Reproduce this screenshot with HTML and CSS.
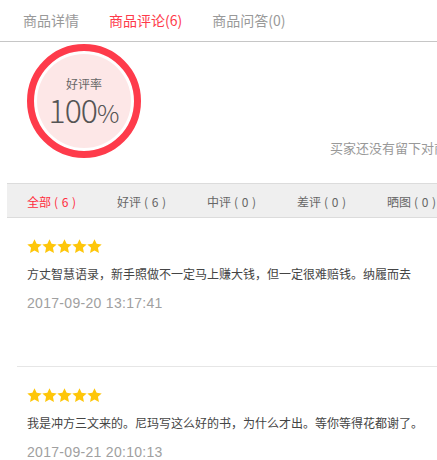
FILE: index.html
```html
<!DOCTYPE html>
<html lang="zh-CN">
<head>
<meta charset="utf-8">
<link rel="stylesheet" href="styles.css">
</head>
<body>
<div class="page">
  <div class="tabs">
    <span class="tab">商品详情</span>
    <span class="tab active">商品评论(6)</span>
    <span class="tab">商品问答(0)</span>
  </div>
  <div class="summary">
    <div class="ring">
      <div class="ring-label">好评率</div>
      <div class="ring-value">100<span class="pct">%</span></div>
    </div>
    <div class="note">买家还没有留下对商品的印象</div>
  </div>
  <div class="filters">
    <span class="filter active">全部<span class="count">( 6 )</span></span>
    <span class="filter">好评<span class="count">( 6 )</span></span>
    <span class="filter">中评<span class="count">( 0 )</span></span>
    <span class="filter">差评<span class="count">( 0 )</span></span>
    <span class="filter">晒图<span class="count">( 0 )</span></span>
  </div>
  <div class="reviews">
    <div class="review">
      <div class="stars">
        <svg viewBox="0 0 24 24"><polygon points="12,0.5 15.4,7.7 23.5,8.6 17.5,14.1 19.1,22.5 12,18.4 4.9,22.5 6.5,14.1 0.5,8.6 8.6,7.7"/></svg>
        <svg viewBox="0 0 24 24"><polygon points="12,0.5 15.4,7.7 23.5,8.6 17.5,14.1 19.1,22.5 12,18.4 4.9,22.5 6.5,14.1 0.5,8.6 8.6,7.7"/></svg>
        <svg viewBox="0 0 24 24"><polygon points="12,0.5 15.4,7.7 23.5,8.6 17.5,14.1 19.1,22.5 12,18.4 4.9,22.5 6.5,14.1 0.5,8.6 8.6,7.7"/></svg>
        <svg viewBox="0 0 24 24"><polygon points="12,0.5 15.4,7.7 23.5,8.6 17.5,14.1 19.1,22.5 12,18.4 4.9,22.5 6.5,14.1 0.5,8.6 8.6,7.7"/></svg>
        <svg viewBox="0 0 24 24"><polygon points="12,0.5 15.4,7.7 23.5,8.6 17.5,14.1 19.1,22.5 12,18.4 4.9,22.5 6.5,14.1 0.5,8.6 8.6,7.7"/></svg>
      </div>
      <div class="text">方丈智慧语录，新手照做不一定马上赚大钱，但一定很难赔钱。纳履而去</div>
      <div class="date">2017-09-20 13:17:41</div>
    </div>
    <div class="review">
      <div class="stars">
        <svg viewBox="0 0 24 24"><polygon points="12,0.5 15.4,7.7 23.5,8.6 17.5,14.1 19.1,22.5 12,18.4 4.9,22.5 6.5,14.1 0.5,8.6 8.6,7.7"/></svg>
        <svg viewBox="0 0 24 24"><polygon points="12,0.5 15.4,7.7 23.5,8.6 17.5,14.1 19.1,22.5 12,18.4 4.9,22.5 6.5,14.1 0.5,8.6 8.6,7.7"/></svg>
        <svg viewBox="0 0 24 24"><polygon points="12,0.5 15.4,7.7 23.5,8.6 17.5,14.1 19.1,22.5 12,18.4 4.9,22.5 6.5,14.1 0.5,8.6 8.6,7.7"/></svg>
        <svg viewBox="0 0 24 24"><polygon points="12,0.5 15.4,7.7 23.5,8.6 17.5,14.1 19.1,22.5 12,18.4 4.9,22.5 6.5,14.1 0.5,8.6 8.6,7.7"/></svg>
        <svg viewBox="0 0 24 24"><polygon points="12,0.5 15.4,7.7 23.5,8.6 17.5,14.1 19.1,22.5 12,18.4 4.9,22.5 6.5,14.1 0.5,8.6 8.6,7.7"/></svg>
      </div>
      <div class="text">我是冲方三文来的。尼玛写这么好的书，为什么才出。等你等得花都谢了。</div>
      <div class="date">2017-09-21 20:10:13</div>
    </div>
  </div>
</div>
</body>
</html>
```

FILE: styles.css
```css
html, body {
  margin: 0;
  padding: 0;
  background: #fff;
}
body {
  font-family: "Noto Sans CJK SC", "Liberation Sans", sans-serif;
  overflow: hidden;
}
.page {
  width: 437px;
  height: 460px;
  overflow: hidden;
}
.tabs {
  display: flex;
  align-items: center;
  gap: 30px;
  height: 41px;
  padding-left: 23px;
  border-bottom: 1px solid #c6c6c6;
  box-sizing: content-box;
}
.tab {
  font-size: 14px;
  color: #999;
  line-height: 20px;
  padding-bottom: 2px;
}
.tab.active {
  color: #fe3a4a;
}
.summary {
  display: flex;
  height: 141px;
  padding-left: 27px;
  box-sizing: border-box;
  padding-top: 2px;
}
.ring {
  width: 114px;
  height: 114px;
  flex: none;
  box-sizing: border-box;
  border: 7px solid #fe3b4b;
  border-radius: 50%;
  background: #fde7e7;
  box-shadow: inset 0 0 0 3px #fff;
  display: flex;
  flex-direction: column;
  align-items: center;
  padding-top: 24px;
}
.ring-label {
  font-size: 12px;
  line-height: 18px;
  color: #666;
}
.ring-value {
  font-size: 32px;
  font-weight: 300;
  line-height: 32px;
  color: #555;
  letter-spacing: -1px;
}
.pct {
  font-size: 25px;
  letter-spacing: 0;
}
.note {
  margin-left: 189px;
  margin-top: 95px;
  font-size: 13px;
  line-height: 18px;
  color: #999;
  white-space: nowrap;
}
.filters {
  display: flex;
  margin-left: 7px;
  padding-left: 20px;
  height: 33px;
  align-items: center;
  background: #efefef;
  border-top: 1px solid #dcdcdc;
  border-bottom: 1px solid #dcdcdc;
}
.filter {
  flex: none;
  width: 90px;
  font-size: 12px;
  line-height: 16px;
  padding-top: 2px;
  color: #666;
  white-space: nowrap;
}
.count {
  margin-left: 3px;
  word-spacing: 1px;
}
.filter.active {
  color: #ff2d3d;
}
.reviews {
  margin-left: 17px;
}
.review {
  padding: 21px 0 53px 10px;
  border-bottom: 1px solid #e6e6e6;
}
.stars {
  display: flex;
  height: 15px;
}
.stars svg {
  width: 15px;
  height: 15px;
  fill: #fec60a;
}
.text {
  margin-top: 10px;
  font-size: 12px;
  line-height: 20px;
  color: #444;
  white-space: nowrap;
}
.date {
  margin-top: 9px;
  font-family: "Liberation Sans", sans-serif;
  font-size: 14px;
  line-height: 20px;
  letter-spacing: 0.3px;
  color: #a0a0a0;
}
```
